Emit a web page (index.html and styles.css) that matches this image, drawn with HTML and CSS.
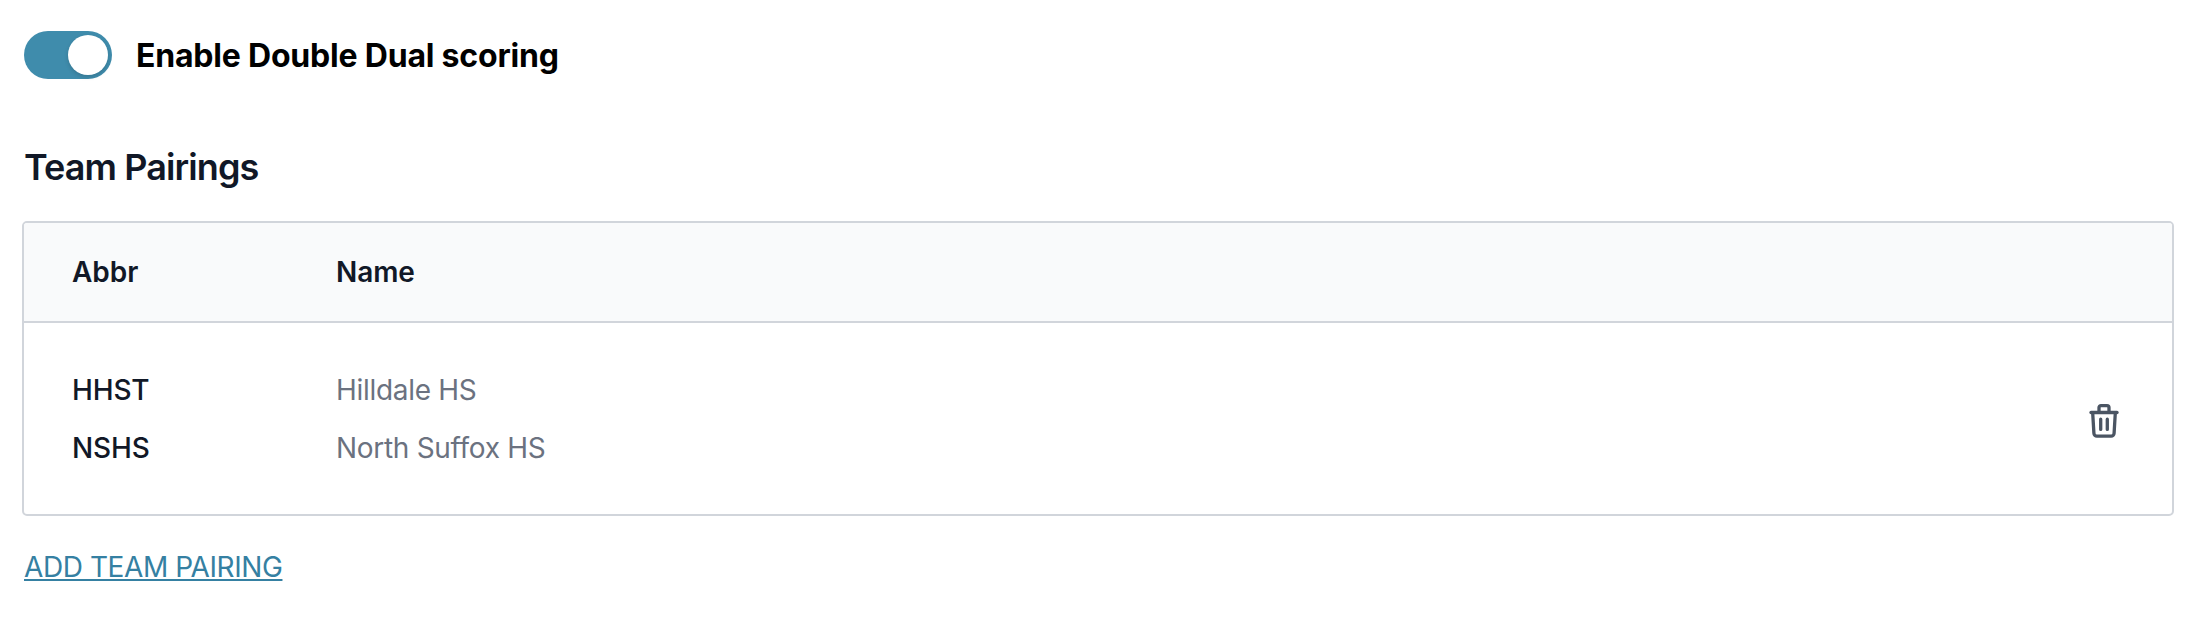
FILE: index.html
```html
<!DOCTYPE html>
<html lang="en">
<head>
    <meta charset="UTF-8">
    <meta name="viewport" content="width=device-width, initial-scale=1.0">
    <title>Double Dual Scoring</title>
    <link rel="stylesheet" href="styles.css">
</head>
<body>

    <div class="setting">
        <button class="toggle" role="switch" aria-checked="true" aria-labelledby="toggle-label">
            <span class="knob"></span>
        </button>
        <span id="toggle-label" class="toggle-label">Enable Double Dual scoring</span>
    </div>

    <h2 class="title">Team Pairings</h2>

    <div class="pairings">
        <div class="row head">
            <span class="abbr">Abbr</span>
            <span class="name">Name</span>
        </div>
        <div class="row pairing">
            <div class="abbr">
                <div>HHST</div>
                <div>NSHS</div>
            </div>
            <div class="name">
                <div>Hilldale HS</div>
                <div>North Suffox HS</div>
            </div>
            <button class="delete" aria-label="Delete">
                <svg width="32" height="36" viewBox="0 0 32 36" fill="none" stroke="currentColor" stroke-width="3.3" stroke-linecap="round" stroke-linejoin="round">
                    <path d="M3 9.5h26"/>
                    <path d="M11 9V4.6a2 2 0 0 1 2-2h6a2 2 0 0 1 2 2V9"/>
                    <path d="M4.7 10l1.2 20.2a3 3 0 0 0 3 2.9h14.2a3 3 0 0 0 3-2.9L27.3 10"/>
                    <path d="M12.7 16.2v10.2M19.3 16.2v10.2"/>
                </svg>
            </button>
        </div>
    </div>

    <a href="#" class="add-link">ADD TEAM PAIRING</a>

</body>
</html>
```

FILE: styles.css
```css
body {
    font-family: Inter, "Liberation Sans", sans-serif;
    font-size: 28px;
    background: #fff;
    color: #111827;
    margin: 0;
    padding: 31px 20px 0 22px;
}

button {
    border: none;
    padding: 0;
    cursor: pointer;
}

/* Toggle */
.setting {
    display: flex;
    align-items: center;
    gap: 24px;
    height: 48px;
    padding-left: 2px;
}

.toggle {
    display: flex;
    justify-content: flex-end;
    box-sizing: border-box;
    width: 88px;
    height: 48px;
    padding: 4px;
    border-radius: 24px;
    background: #3f8cac;
}

.knob {
    width: 40px;
    height: 40px;
    border-radius: 50%;
    background: #fff;
    box-shadow: 0 2px 4px rgba(0, 0, 0, 0.15);
}

.toggle-label {
    padding-top: 2px;
    font-size: 32px;
    font-weight: 700;
    line-height: 48px;
    color: #000;
    letter-spacing: -0.2px;
}

.title {
    margin: 68px 0 34px 2px;
    font-size: 36px;
    font-weight: 600;
    line-height: 40px;
    letter-spacing: -0.9px;
}

/* Pairings table */
.pairings {
    border: 2px solid #d1d5db;
    border-radius: 5px;
    overflow: hidden;
}

.row {
    display: flex;
    align-items: center;
    padding: 0 48px;
}

.head {
    height: 98px;
    background: #f9fafb;
    border-bottom: 2px solid #d1d5db;
    font-weight: 600;
    letter-spacing: -0.1px;
}

.pairing {
    padding-top: 38px;
    padding-bottom: 37px;
    line-height: 58px;
}

.abbr {
    width: 264px;
    font-weight: 500;
    letter-spacing: -0.15px;
}

.head .abbr {
    font-weight: 600;
    letter-spacing: 0;
}

.pairing .name {
    flex: 1;
    color: #6b7280;
    letter-spacing: -0.3px;
}

.delete {
    display: flex;
    margin: 4px 4px 0 0;
    background: none;
    color: #4b5563;
}

.add-link {
    display: inline-block;
    margin: 34px 0 0 2px;
    line-height: 34px;
    color: #3580a2;
    letter-spacing: -0.42px;
    text-decoration: underline;
    text-decoration-thickness: 2px;
    text-underline-offset: 2px;
}
```
